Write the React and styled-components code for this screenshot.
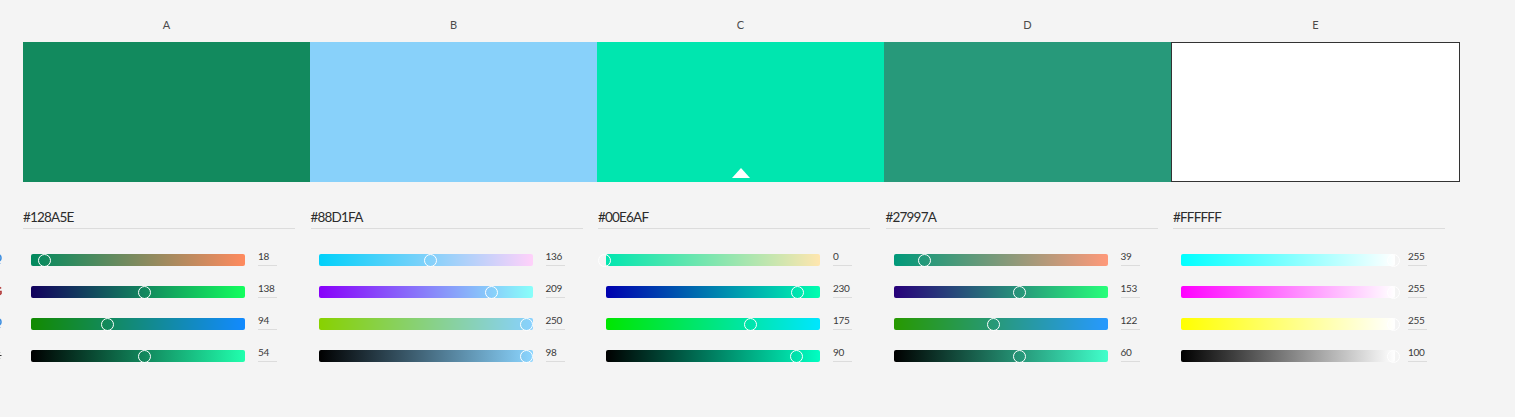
import React from "react";
import styled, { createGlobalStyle } from "styled-components";

const GlobalStyle = createGlobalStyle`
  html, body { margin: 0; padding: 0; background: #f4f4f4; }
  body { font-family: Lato, "Open Sans", Arial, sans-serif; color: #2c2c2c; }
`;

const Page = styled.div`
  display: flex;
  width: 1515px;
  height: 417px;
  overflow: hidden;
  background: #f4f4f4;
`;

const Rail = styled.div`
  width: 23px;
  flex: none;
  display: flex;
  flex-direction: column;
  padding-top: 253px;
  box-sizing: border-box;
`;

const RailIcon = styled.div`
  height: 12px;
  margin-bottom: 20px;
  margin-right: 21px;
  display: flex;
  justify-content: flex-end;
  align-items: center;
  overflow: visible;
  svg { flex: none; display: block; }
`;

const Main = styled.div`
  display: flex;
  flex-direction: column;
`;

const SwatchStrip = styled.div`
  display: grid;
  grid-template-columns: repeat(4, 287px) 289px;
`;

const SwatchCell = styled.div`
  display: flex;
  flex-direction: column;
`;

const Controls = styled.div`
  display: grid;
  grid-template-columns: repeat(5, 287.5px);
`;

const ControlColumn = styled.div`
  display: flex;
  flex-direction: column;
`;

const Letter = styled.div`
  height: 42px;
  display: flex;
  align-items: center;
  justify-content: center;
  font-size: 11px;
  color: #4b4b4b;
  padding-top: 7px;
  box-sizing: border-box;
`;

const Swatch = styled.div`
  position: relative;
  height: 140px;
  background: ${(p) => p.$color};
  box-sizing: border-box;
  border: ${(p) => (p.$bordered ? "1px solid #333" : "none")};
`;

const Pointer = styled.div`
  position: absolute;
  left: 50%;
  bottom: 4px;
  transform: translateX(-50%);
  width: 0;
  height: 0;
  border-left: 9px solid transparent;
  border-right: 9px solid transparent;
  border-bottom: 10px solid #fff;
`;

const HexField = styled.div`
  margin-top: 24px;
  width: 272px;
  height: 23px;
  box-sizing: border-box;
  border-bottom: 1px solid #dcdcdc;
  font-size: 13.5px;
  line-height: 22px;
  letter-spacing: -0.8px;
  color: #2c2c2c;
`;

const Sliders = styled.div`
  margin-top: 25px;
  display: flex;
  flex-direction: column;
  gap: 20px;
`;

const SliderRow = styled.div`
  display: flex;
  align-items: flex-start;
  height: 12px;
  padding-left: 8px;
`;

const Track = styled.div`
  position: relative;
  width: 214px;
  height: 12px;
  border-radius: 2px;
  background: linear-gradient(to right, ${(p) => p.$from}, ${(p) => p.$to});
  flex: none;
`;

const Thumb = styled.div`
  position: absolute;
  top: -0.5px;
  width: 13px;
  height: 13px;
  box-sizing: border-box;
  border-radius: 50%;
  border: 1.5px solid #fff;
  background: transparent;
`;

const Value = styled.div`
  margin-left: 13px;
  margin-top: -2px;
  width: 19px;
  height: 14px;
  box-sizing: border-box;
  border-bottom: 1px solid #dcdcdc;
  font-size: 10px;
  line-height: 9px;
  letter-spacing: -0.3px;
  color: #3a3a3a;
`;

const colors = [
  { label: "A", hex: "128A5E" },
  { label: "B", hex: "88D1FA" },
  { label: "C", hex: "00E6AF", selected: true },
  { label: "D", hex: "27997A" },
  { label: "E", hex: "FFFFFF", bordered: true },
];

const rgbStr = (r, g, b) => `rgb(${Math.round(r)}, ${Math.round(g)}, ${Math.round(b)})`;

function channels(hex) {
  const r = parseInt(hex.slice(0, 2), 16);
  const g = parseInt(hex.slice(2, 4), 16);
  const b = parseInt(hex.slice(4, 6), 16);
  const max = Math.max(r, g, b);
  const bright = Math.round((max / 255) * 100);
  const k = max === 0 ? 0 : 255 / max;
  return [
    { value: r, frac: r / 255, from: rgbStr(0, g, b), to: rgbStr(255, g, b) },
    { value: g, frac: g / 255, from: rgbStr(r, 0, b), to: rgbStr(r, 255, b) },
    { value: b, frac: b / 255, from: rgbStr(r, g, 0), to: rgbStr(r, g, 255) },
    { value: bright, frac: bright / 100, from: "rgb(0, 0, 0)", to: rgbStr(r * k, g * k, b * k) },
  ];
}

const ChannelGlyph = ({ color }) => (
  <svg width="10" height="10" viewBox="0 0 10 10">
    <path d="M1 1h5a3 3 0 0 1 0 6H1zM5 7l3 3" fill="none" stroke={color} strokeWidth="1.6" />
  </svg>
);

const GreenGlyph = () => (
  <svg width="10" height="10" viewBox="0 0 10 10">
    <path d="M9 2.5A4 4 0 1 0 9 7.5V5.5H6" fill="none" stroke="#b23a3a" strokeWidth="1.6" />
  </svg>
);

const SunGlyph = () => (
  <svg width="11" height="11" viewBox="0 0 11 11">
    <circle cx="5.5" cy="5.5" r="2" fill="none" stroke="#333" strokeWidth="1.2" />
    <path d="M5.5 0.5v1.5M5.5 9v1.5M0.5 5.5h1.5M9 5.5h1.5M2 2l1 1M8 8l1 1M2 9l1-1M8 3l1-1" stroke="#333" strokeWidth="1.2" />
  </svg>
);

const railIcons = [
  <ChannelGlyph key="r" color="#3b8de0" />,
  <GreenGlyph key="g" />,
  <ChannelGlyph key="b" color="#3b8de0" />,
  <SunGlyph key="s" />,
];

export default function App() {
  return (
    <>
      <GlobalStyle />
      <Page>
        <Rail>
          {railIcons.map((icon, n) => (
            <RailIcon key={n}>{icon}</RailIcon>
          ))}
        </Rail>
        <Main>
          <SwatchStrip>
            {colors.map((c) => (
              <SwatchCell key={c.label}>
                <Letter>{c.label}</Letter>
                <Swatch $color={`#${c.hex}`} $bordered={c.bordered}>
                  {c.selected && <Pointer />}
                </Swatch>
              </SwatchCell>
            ))}
          </SwatchStrip>
          <Controls>
            {colors.map((c) => (
              <ControlColumn key={c.label}>
                <HexField>#{c.hex}</HexField>
                <Sliders>
                  {channels(c.hex).map((s, i) => (
                    <SliderRow key={i}>
                      <Track $from={s.from} $to={s.to}>
                        <Thumb style={{ left: `${-2 + s.frac * 214 - 6.5}px` }} />
                      </Track>
                      <Value>{s.value}</Value>
                    </SliderRow>
                  ))}
                </Sliders>
              </ControlColumn>
            ))}
          </Controls>
        </Main>
      </Page>
    </>
  );
}
